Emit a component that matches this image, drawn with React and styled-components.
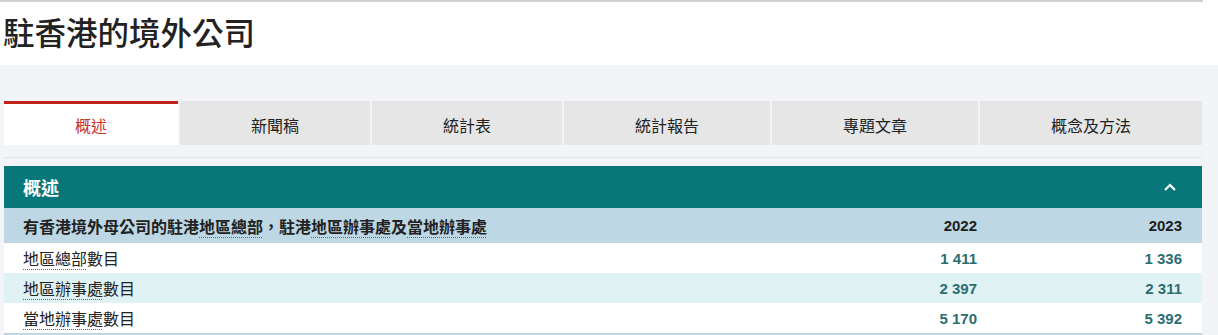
import styled, { createGlobalStyle } from 'styled-components';

const GlobalStyle = createGlobalStyle`
  body {
    margin: 0;
    background: #ffffff;
    font-family: "Liberation Sans", "Noto Sans CJK TC", Arial, sans-serif;
    color: #222222;
  }
`;

const TopRule = styled.div`
  height: 2px;
  width: 1203px;
  background: #cfcfcf;
`;

const TitleBar = styled.div`
  height: 63px;
  display: flex;
  align-items: center;
  padding-left: 3px;
`;

const Title = styled.h1`
  margin: 0;
  font-family: "Noto Sans CJK TC", sans-serif;
  font-size: 31.5px;
  font-weight: 500;
  color: #222222;
  line-height: 1;
  padding-bottom: 4px;
`;

const Section = styled.div`
  background: #f3f4f7;
  padding: 36px 16px 0 4px;
`;

const TabBar = styled.div`
  display: flex;
  gap: 2px;
  height: 44px;
`;

const Tab = styled.button`
  flex: 1 1 auto;
  border: none;
  border-top: 3px solid ${(p) => (p.$active ? '#c0221a' : '#e6e6e6')};
  background: ${(p) => (p.$active ? '#ffffff' : '#e6e6e6')};
  color: ${(p) => (p.$active ? '#c8302a' : '#222222')};
  font-family: "Noto Sans CJK TC", sans-serif;
  font-size: 16px;
  padding: 0;
  cursor: pointer;
  display: flex;
  align-items: center;
  justify-content: center;
`;

const Divider = styled.div`
  margin: 12px 0 8px;
  height: 1px;
  background: #e3e5e9;
`;

const PanelHead = styled.div`
  height: 42px;
  background: #07777a;
  display: flex;
  align-items: center;
  justify-content: space-between;
  padding: 0 26px 0 19px;
`;

const PanelTitle = styled.span`
  font-family: "Noto Sans CJK TC", sans-serif;
  font-size: 18px;
  font-weight: 700;
  color: #ffffff;
`;

const Table = styled.div`
  border-bottom: 2px solid #bdd7e4;
`;

const Row = styled.div`
  display: grid;
  grid-template-columns: 1fr 205px 205px;
  align-items: center;
  height: ${(p) => (p.$head ? 35 : 30)}px;
  padding: 0 20px 0 19px;
  background: ${(p) => (p.$head ? '#bdd7e4' : p.$alt ? '#e1f2f4' : '#ffffff')};
  font-weight: ${(p) => (p.$head ? 700 : 400)};
`;

const Label = styled.span`
  font-family: "Noto Sans CJK TC", sans-serif;
  font-size: 16px;
  color: #222222;
  white-space: nowrap;
`;

const Term = styled.span`
  text-decoration: underline dotted #3b6cc2;
  text-decoration-thickness: 1px;
  text-underline-offset: 4px;
`;

const Num = styled.span`
  font-family: "Liberation Sans", Arial, sans-serif;
  font-size: 15px;
  font-weight: 700;
  text-align: right;
  color: ${(p) => (p.$year ? '#1c1c1c' : '#2c6d71')};
`;

const Chevron = () => (
  <svg width="12" height="8" viewBox="0 0 12 8" fill="none">
    <polyline points="1,7 6,2 11,7" stroke="#ffffff" strokeWidth="2.2" />
  </svg>
);

const tabs = ['概述', '新聞稿', '統計表', '統計報告', '專題文章', '概念及方法'];

const rows = [
  { label: <><Term>地區總部</Term>數目</>, a: '1 411', b: '1 336' },
  { label: <><Term>地區辦事處</Term>數目</>, a: '2 397', b: '2 311' },
  { label: <><Term>當地辦事處</Term>數目</>, a: '5 170', b: '5 392' },
];

export default function App() {
  return (
    <>
      <GlobalStyle />
      <TopRule />
      <TitleBar>
        <Title>駐香港的境外公司</Title>
      </TitleBar>
      <Section>
        <TabBar>
          {tabs.map((t, i) => (
            <Tab key={t} $active={i === 0}>{t}</Tab>
          ))}
        </TabBar>
        <Divider />
        <PanelHead>
          <PanelTitle>概述</PanelTitle>
          <Chevron />
        </PanelHead>
        <Table>
          <Row $head>
            <Label>
              有香港境外母公司的駐港<Term>地區總部</Term>，駐港<Term>地區辦事處</Term>及<Term>當地辦事處</Term>
            </Label>
            <Num $year>2022</Num>
            <Num $year>2023</Num>
          </Row>
          {rows.map((r, i) => (
            <Row key={i} $alt={i % 2 === 1}>
              <Label>{r.label}</Label>
              <Num>{r.a}</Num>
              <Num>{r.b}</Num>
            </Row>
          ))}
        </Table>
      </Section>
    </>
  );
}
